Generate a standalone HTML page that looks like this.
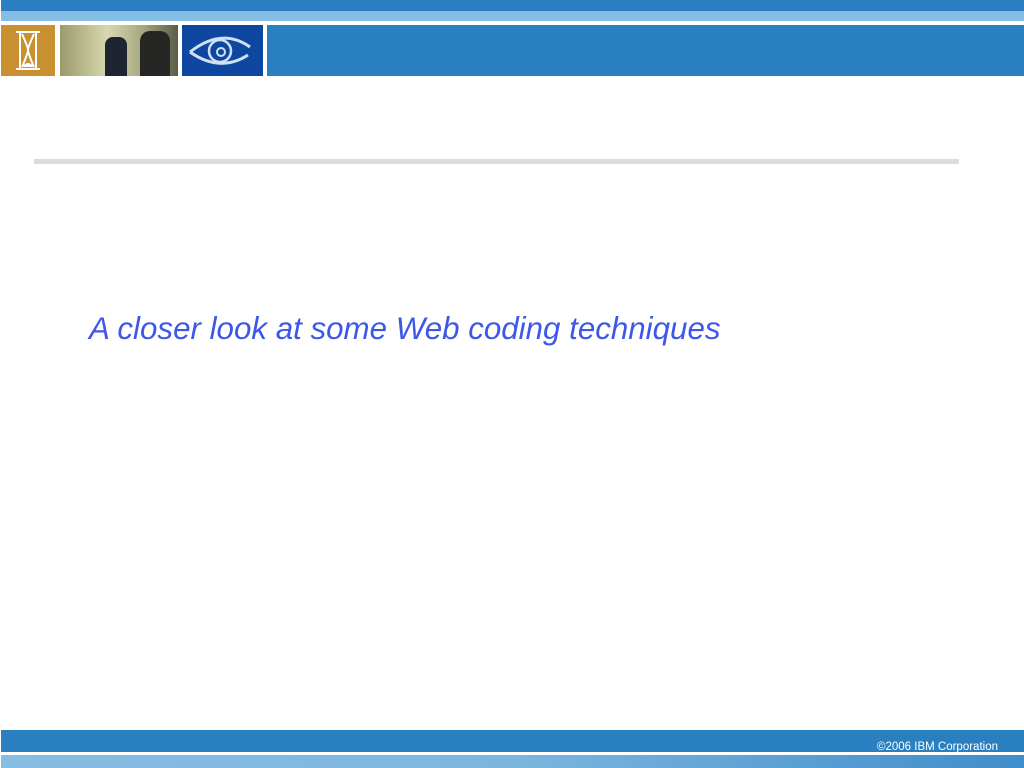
<!DOCTYPE html>
<html><head><style>
body{margin:0;width:1024px;height:768px;position:relative;background:#fff;overflow:hidden;font-family:"Liberation Sans",sans-serif}
div{position:absolute}
</style></head><body>
<div style="left:1px;top:0;width:1023px;height:11px;background:#2a7fc1"></div>
<div style="left:1px;top:11px;width:1023px;height:10px;background:#86bde3"></div>
<div style="left:1px;top:25px;width:54px;height:51px;background:#c8902f">
<svg width="54" height="51"><g stroke="#fff" fill="none" stroke-width="2"><line x1="15" y1="7" x2="39" y2="7"/><line x1="15" y1="44" x2="39" y2="44"/><line x1="19" y1="7" x2="19" y2="44"/><line x1="35" y1="7" x2="35" y2="44"/><path d="M21 9 Q27 22 27 25 Q27 28 21 42 M33 9 Q27 22 27 25 Q27 28 33 42"/></g><path d="M21 42 Q27 34 33 42Z" fill="#fff"/></svg></div>
<div style="left:60px;top:25px;width:118px;height:51px;background:linear-gradient(90deg,#9a9a6a,#d8d8b0 40%,#a8a880 70%,#5a5a4a)">
<div style="left:45px;top:12px;width:22px;height:39px;background:#1e2430;border-radius:8px 8px 0 0"></div>
<div style="left:80px;top:6px;width:30px;height:45px;background:#262624;border-radius:10px 10px 0 0"></div>
</div>
<div style="left:182px;top:25px;width:81px;height:51px;background:#0e47a0">
<svg width="81" height="51"><g stroke="#cfe0f5" fill="none" stroke-width="3"><path d="M8 27 Q40 2 68 22 M8 27 Q38 48 66 30"/><circle cx="38" cy="26" r="11" stroke-width="2.5"/><circle cx="39" cy="27" r="4" stroke-width="2"/></g></svg></div>
<div style="left:267px;top:25px;width:757px;height:51px;background:#2a7fc1"></div>
<div style="left:34px;top:159px;width:925px;height:5px;background:#dcdcdc"></div>
<div style="left:89px;top:311px;font-size:31.3px;font-style:italic;color:#3d57e8;white-space:nowrap">A closer look at some Web coding techniques</div>
<div style="left:1px;top:730px;width:1023px;height:22px;background:#2a7fc1"></div>
<div style="left:877px;top:741px;font-size:11.5px;color:#fff">©2006 IBM Corporation</div>
<div style="left:1px;top:755px;width:1023px;height:13px;background:linear-gradient(90deg,#86bde3,#7cb6df 50%,#3f8dcb)"></div>
</body></html>
